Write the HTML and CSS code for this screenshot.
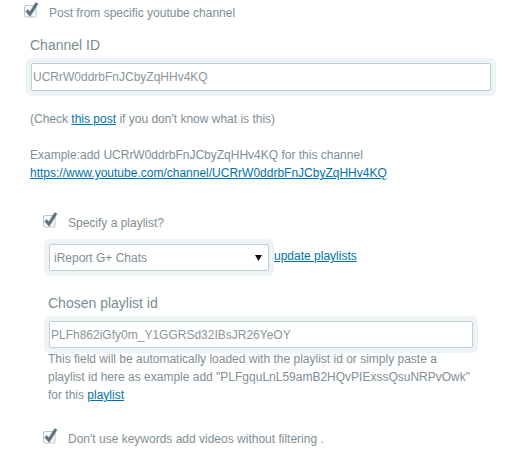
FILE: index.html
```html
<!DOCTYPE html>
<html>
<head>
<meta charset="utf-8">
<link rel="stylesheet" href="styles.css">
</head>
<body>
<div class="check-row main-row">
  <svg class="cb" viewBox="0 0 16 20" width="16" height="20"><rect x="1.5" y="5.5" width="11.5" height="11.5" rx="1.5" fill="#f4f7f8" stroke="#b7c8cd"/><path d="M3.6 10.4 L7 14.2 L14 3" fill="none" stroke="#5e7582" stroke-width="3.2"/></svg>
  <span class="cb-label">Post from specific youtube channel</span>
</div>

<div class="label channel-label">Channel ID</div>
<input class="field channel-field" type="text" value="UCRrW0ddrbFnJCbyZqHHv4KQ">

<div class="info">
  <p>(Check <a href="#">this post</a> if you don't know what is this)</p>
  <p class="gap">Example:add UCRrW0ddrbFnJCbyZqHHv4KQ for this channel<br><a href="#">https://www.youtube.com/channel/UCRrW0ddrbFnJCbyZqHHv4KQ</a></p>
</div>

<div class="playlist">
  <div class="check-row sub-row">
    <svg class="cb" viewBox="0 0 16 20" width="16" height="20"><rect x="1.5" y="5.5" width="11.5" height="11.5" rx="1.5" fill="#f4f7f8" stroke="#b7c8cd"/><path d="M3.6 10.4 L7 14.2 L14 3" fill="none" stroke="#5e7582" stroke-width="3.2"/></svg>
    <span class="cb-label">Specify a playlist?</span>
  </div>

  <div class="select-row">
    <div class="select">
      <span>iReport G+ Chats</span>
      <svg class="arrow" viewBox="0 0 7 6" width="7" height="6"><path d="M0 0 H7 L3.5 6 Z" fill="#111"/></svg>
    </div>
    <a class="update" href="#">update playlists</a>
  </div>

  <div class="label chosen-label">Chosen playlist id</div>
  <input class="field playlist-field" type="text" value="PLFh862iGfy0m_Y1GGRSd32IBsJR26YeOY">
  <p class="help">This field will be automatically loaded with the playlist id or simply paste a playlist id here as example add "PLFgquLnL59amB2HQvPIExssQsuNRPvOwk" for this <a href="#">playlist</a></p>

  <div class="check-row sub-row last-row">
    <svg class="cb" viewBox="0 0 16 20" width="16" height="20"><rect x="1.5" y="5.5" width="11.5" height="11.5" rx="1.5" fill="#f4f7f8" stroke="#b7c8cd"/><path d="M3.6 10.4 L7 14.2 L14 3" fill="none" stroke="#5e7582" stroke-width="3.2"/></svg>
    <span class="cb-label">Don't use keywords add videos without filtering .</span>
  </div>
</div>
</body>
</html>
```

FILE: styles.css
```css
body {
  margin: 0;
  background: #fff;
  font-family: "Liberation Sans", Arial, sans-serif;
  font-size: 12px;
  line-height: 18px;
  color: #808e96;
}
a {
  color: #0073aa;
  text-decoration: underline;
}
p {
  margin: 0;
}
.check-row {
  display: flex;
  align-items: flex-start;
}
.cb {
  flex: none;
  display: block;
  margin-top: -4px;
}
.cb-label {
  margin-left: 10px;
}
.main-row {
  padding: 4px 0 0 23px;
}
.sub-row {
  padding-left: 42px;
}
.label {
  font-size: 14px;
  line-height: 20px;
  color: #7c8b93;
}
.channel-label {
  margin-top: 13px;
  padding-left: 30px;
}
.field {
  display: block;
  box-sizing: border-box;
  border: 1px solid #bccfd4;
  border-radius: 2px;
  box-shadow: 0 0 0 5px #eef4f6;
  padding: 0 0 0 1px;
  font-family: "Liberation Sans", Arial, sans-serif;
  font-size: 12px;
  color: #8a969b;
  background: #fff;
  outline: none;
}
.channel-field {
  margin: 8px 0 0 31px;
  width: 460px;
  height: 28px;
}
.info {
  margin-top: 19px;
  padding-left: 30px;
}
.info .gap {
  margin-top: 18px;
}
.playlist {
  margin-top: 32px;
}
.select-row {
  display: flex;
  align-items: flex-start;
  margin-top: 12px;
  padding-left: 49px;
}
.select {
  box-sizing: border-box;
  width: 220px;
  height: 27px;
  border: 1px solid #bccfd4;
  border-radius: 2px;
  box-shadow: 0 0 0 5px #eef4f6;
  display: flex;
  align-items: center;
  justify-content: space-between;
  padding: 0 6px 0 4px;
  color: #808e96;
  background: #fff;
}
.arrow {
  display: block;
}
.update {
  margin: 3px 0 0 5px;
}
.chosen-label {
  margin-top: 22px;
  padding-left: 48px;
}
.playlist-field {
  margin: 8px 0 0 49px;
  width: 424px;
  height: 27px;
}
.help {
  margin: 2px 0 0 48px;
  width: 425px;
}
.last-row {
  margin-top: 26px;
}
```
